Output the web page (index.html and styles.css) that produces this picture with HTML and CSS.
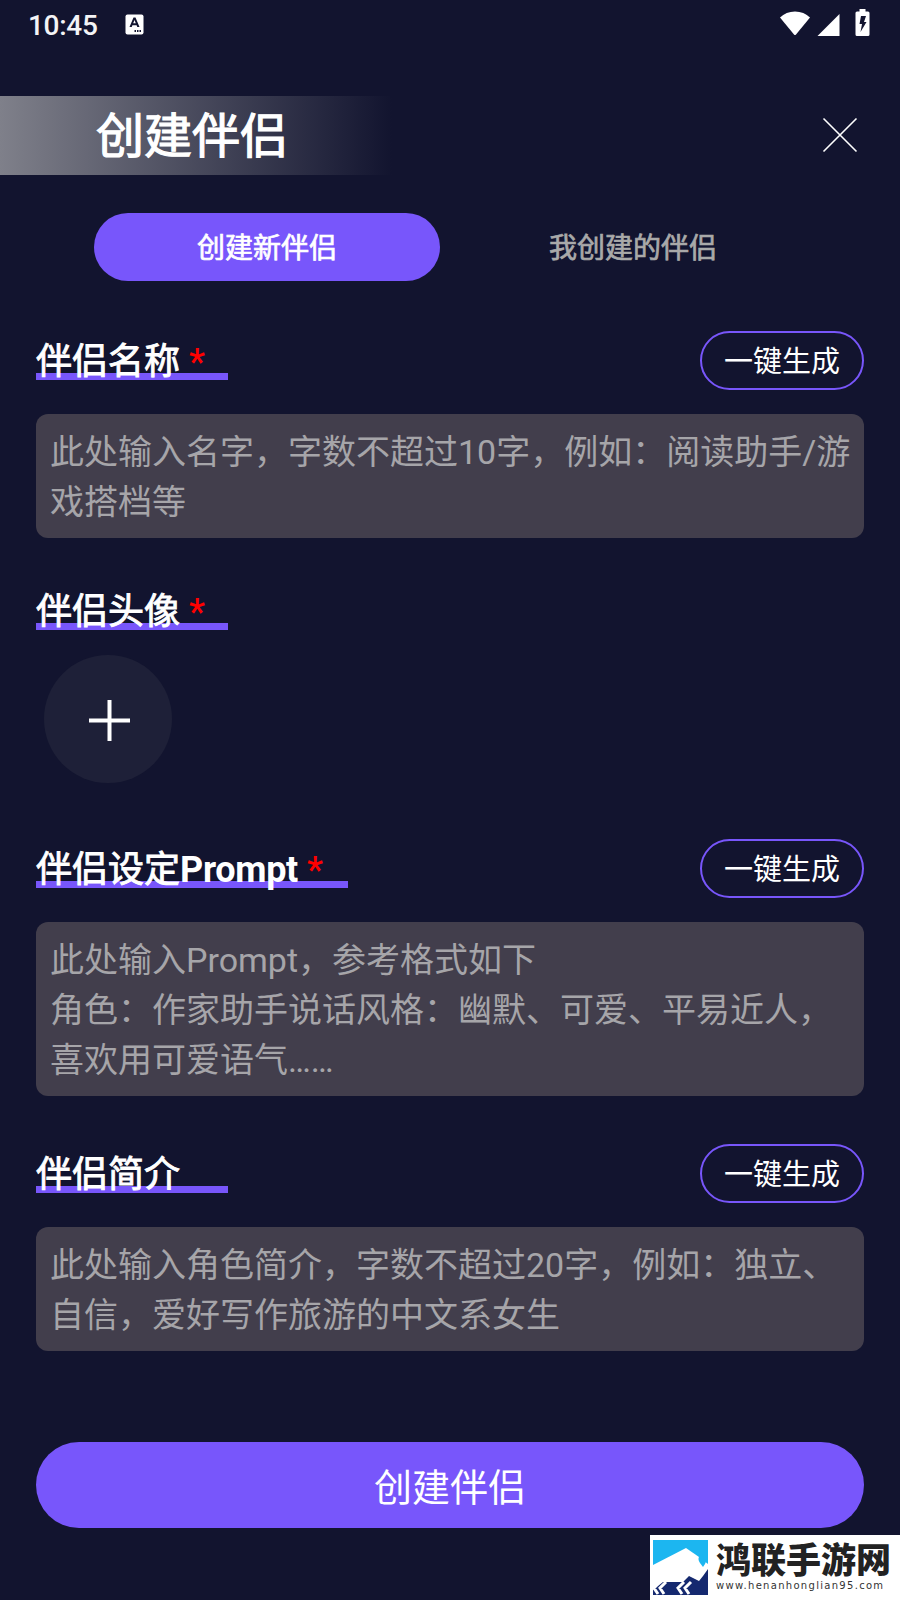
FILE: index.html
```html
<!DOCTYPE html>
<html>
	<head>
		<meta charset="UTF-8">
		<title>创建伴侣</title>
		<link rel="stylesheet" href="styles.css">
	</head>
	<body>
		<div class="status_bar">
			<span class="time">10:45</span>
			<svg class="status_a" width="20" height="22" viewBox="0 0 20 22">
				<rect x="0.5" y="0.5" width="18" height="20" rx="2" fill="#fff"/>
				<path d="M4.500 13L8.500 3.500h2L14.500 13h-2.200l-.7-1.800H7.400L6.700 13zM8.200 9.300h2.600L9.500 6z" fill="#12142f" fill-rule="evenodd"/>
				<path d="M9.500 16H11v2H9.500zM12 16h1.500v2H12zM14.500 16H16v2h-1.500z" fill="#12142f"/>
			</svg>
			<div class="status_right">
				<svg class="ic_wifi" width="32" height="26" viewBox="0 0 32 26"><path d="M1 7.500C5 3.500 10 1.500 16 1.500s11 2 15 6L17 24.500q-1 1-2 0z" fill="#fff"/></svg>
				<svg class="ic_signal" width="23" height="23" viewBox="0 0 23 23"><path d="M22.500 1V23H0.500z" fill="#fff"/></svg>
				<svg class="ic_batt" width="15" height="27" viewBox="0 0 15 27">
					<path d="M4.500 0h6v2.500H13q1.500 0 1.500 1.500v21.500q0 1.500-1.500 1.500H2q-1.500 0-1.500-1.500V4Q.5 2.500 2 2.500h2.500z" fill="#fff"/>
					<path d="M6 7h5l-2 6h2.500L5.500 23 7 15H4.500z" fill="#12142f"/>
				</svg>
			</div>
		</div>

		<div class="title_row">
			<h1 class="title">创建伴侣</h1>
			<svg class="close" width="36" height="36" viewBox="0 0 36 36">
				<path d="M1.500 1.500L34.500 34.500M34.500 1.500L1.500 34.500" stroke="#fff" stroke-width="1.600" fill="none"/>
			</svg>
		</div>

		<div class="tabs">
			<div class="tab active">创建新伴侣</div>
			<div class="tab">我创建的伴侣</div>
		</div>

		<form class="form_content">
			<div class="sec_head first">
				<span class="sec_title">伴侣名称<i>*</i></span>
				<button type="button" class="gen">一键生成</button>
			</div>
			<div class="field">此处输入名字，字数不超过10字，例如：阅读助手/游戏搭档等</div>

			<div class="sec_head no_btn">
				<span class="sec_title">伴侣头像<i>*</i></span>
			</div>
			<div class="avatar">
				<svg width="41" height="41" viewBox="0 0 41 41"><path d="M20.500 0V41M0 20.500H41" stroke="#fff" stroke-width="4" fill="none"/></svg>
			</div>

			<div class="sec_head after_avatar">
				<span class="sec_title">伴侣设定<b>Prompt</b><i>*</i></span>
				<button type="button" class="gen">一键生成</button>
			</div>
			<div class="field">此处输入Prompt，参考格式如下<br>角色：作家助手说话风格：幽默、可爱、平易近人，喜欢用可爱语气……</div>

			<div class="sec_head">
				<span class="sec_title">伴侣简介</span>
				<button type="button" class="gen">一键生成</button>
			</div>
			<div class="field">此处输入角色简介，字数不超过20字，例如：独立、自信，爱好写作旅游的中文系女生</div>

			<button type="button" class="submit">创建伴侣</button>
		</form>

		<div class="watermark">
			<svg class="wm_logo" width="55" height="55" viewBox="0 0 55 55">
				<rect width="55" height="55" fill="#1cb6f0"/>
				<path d="M0 25L33 8 46 17 55 24V55H0z" fill="#fff"/>
				<path d="M0 55V50L10 42H30L36 36 46 41 50 36 55 29V55z" fill="#15296f"/>
				<path d="M6 42L1 48 5 54M13 42L7 48 11 54M31 42L25 48 29 54M38 42L32 48 36 54" stroke="#fff" stroke-width="3" fill="none"/>
				<path d="M47 14q-3 5 0 9l3 4 2-3q2-3-1-5l-2-5z" fill="#1cb6f0"/>
			</svg>
			<div class="wm_text">
				<div class="wm_name">鸿联手游网</div>
				<div class="wm_url">www.henanhonglian95.com</div>
			</div>
		</div>
	</body>
</html>
```

FILE: styles.css
```css
*{
	padding: 0;
	margin: 0;
	box-sizing: border-box;
}
body{
	position: relative;
	width: 900px;
	height: 1600px;
	overflow: hidden;
	background: #12142f;
	color: #fff;
	font-family: Roboto, "Noto Sans CJK SC", sans-serif;
}
.status_bar{
	display: flex;
	align-items: center;
	height: 50px;
	padding: 0 30px 0 28px;
}
.time{
	font-size: 28px;
	font-weight: 500;
	letter-spacing: -0.3px;
	color: #f4f4f6;
}
.status_a{
	margin-left: 27px;
}
.status_right{
	display: flex;
	align-items: flex-end;
	margin: 0 0 5px auto;
}
.ic_signal{
	margin-left: 6px;
}
.ic_batt{
	margin-left: 15px;
}
.title_row{
	display: flex;
	align-items: center;
	justify-content: space-between;
	height: 79px;
	margin-top: 46px;
	padding-right: 42px;
}
.title{
	width: 392px;
	height: 79px;
	padding-left: 96px;
	font-size: 48px;
	font-weight: 400;
	line-height: 81px;
	-webkit-text-stroke: 1.2px #fff;
	background: linear-gradient(90deg, #7f808a, #12142f);
}
.close{
	margin-bottom: 2px;
}
.tabs{
	display: flex;
	margin: 38px 0 0 94px;
}
.tab{
	width: 346px;
	height: 68px;
	margin-right: 20px;
	border-radius: 34px;
	font-size: 28px;
	line-height: 72px;
	text-align: center;
	color: #a9a9a9;
	-webkit-text-stroke: 0.7px #a9a9a9;
}
.tab.active{
	color: #fff;
	-webkit-text-stroke-color: #fff;
	background: #7856fb;
}
.form_content{
	padding: 0 36px;
}
.sec_head{
	display: flex;
	align-items: flex-start;
	justify-content: space-between;
	height: 59px;
	margin: 48px 0 24px;
}
.sec_head.first{
	margin-top: 50px;
}
.sec_head.no_btn{
	margin-top: 43px;
	margin-bottom: 15px;
}
.sec_head.after_avatar{
	margin-top: 56px;
}
.sec_title{
	min-width: 192px;
	height: 49px;
	font-size: 36px;
	line-height: 63px;
	-webkit-text-stroke: 0.9px #fff;
	background: linear-gradient(#7856fb, #7856fb) no-repeat left bottom / 100% 7px;
}
.sec_title b{
	letter-spacing: -0.3px;
	-webkit-text-stroke: 0;
}
.sec_title i{
	margin: 0 23px 0 9px;
	font-style: normal;
	font-weight: 500;
	color: #f00;
	-webkit-text-stroke: 0;
}
.sec_title b + i{
	margin-right: 25px;
}
.gen{
	width: 164px;
	height: 59px;
	padding-bottom: 4px;
	border: 2px solid #7856fb;
	border-radius: 30px;
	font-family: inherit;
	font-size: 29px;
	color: #fff;
	background: none;
}
.field{
	padding: 13px 8px 11px 14px;
	border-radius: 12px;
	font-size: 34px;
	line-height: 50px;
	color: #a6a5a9;
	background: #423e4c;
}
.avatar{
	display: flex;
	align-items: center;
	justify-content: center;
	width: 128px;
	height: 128px;
	margin-left: 8px;
	padding: 2px 0 0 2px;
	border-radius: 50%;
	background: #1e2038;
}
.submit{
	display: block;
	width: 100%;
	height: 86px;
	margin-top: 91px;
	padding-bottom: 2px;
	border: none;
	border-radius: 43px;
	font-family: inherit;
	font-size: 38px;
	color: #fff;
	background: #7856fb;
}
.watermark{
	position: absolute;
	left: 650px;
	top: 1535px;
	display: flex;
	align-items: flex-start;
	width: 250px;
	height: 65px;
	padding: 5px 0 0 3px;
	background: #fff;
}
.wm_text{
	margin-left: 8px;
}
.wm_name{
	font-family: "Noto Sans CJK SC", sans-serif;
	font-size: 35px;
	font-weight: 900;
	line-height: 36px;
	color: #222;
}
.wm_url{
	margin-top: 3px;
	font-family: "DejaVu Sans", sans-serif;
	font-size: 10px;
	line-height: 14px;
	letter-spacing: 1.3px;
	color: #333;
}
```
